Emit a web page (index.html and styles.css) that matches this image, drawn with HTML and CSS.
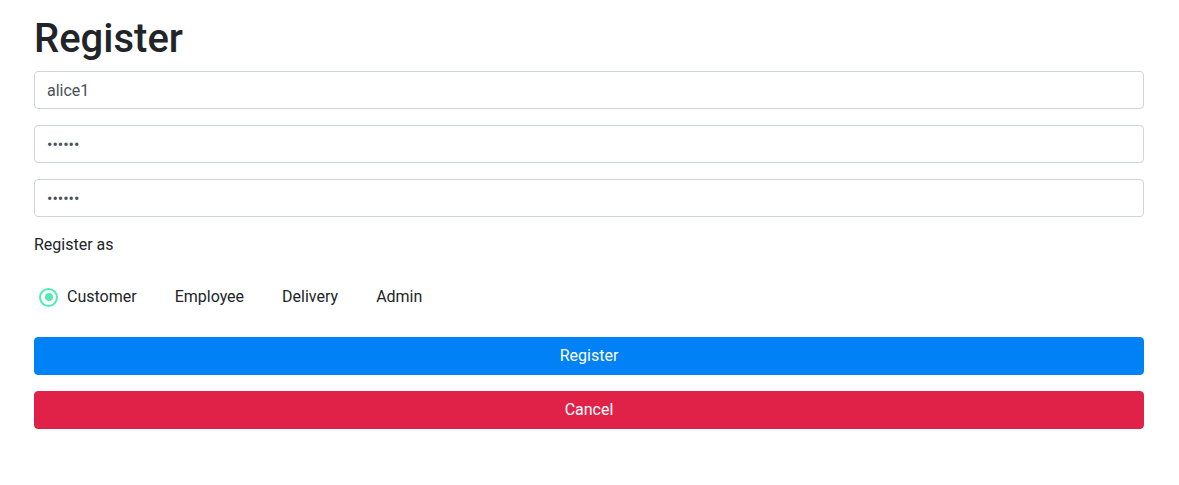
FILE: index.html
```html
<!DOCTYPE html>
<html lang="en">
<head>
<meta charset="utf-8">
<title>Register</title>
<link rel="stylesheet" href="styles.css">
</head>
<body>
<div class="container">
  <h1 class="title">Register</h1>
  <form class="form">
    <input class="field" type="text" value="alice1">
    <input class="field" type="password" value="secret">
    <input class="field" type="password" value="secret">
    <div class="label">Register as</div>
    <div class="radio-group">
      <label class="radio-item"><span class="radio checked"></span><span class="radio-text">Customer</span></label>
      <label class="radio-item"><span class="radio"></span><span class="radio-text">Employee</span></label>
      <label class="radio-item"><span class="radio"></span><span class="radio-text">Delivery</span></label>
      <label class="radio-item"><span class="radio"></span><span class="radio-text">Admin</span></label>
    </div>
    <button type="button" class="btn btn-primary">Register</button>
    <button type="button" class="btn btn-danger">Cancel</button>
  </form>
</div>
</body>
</html>
```
FILE: styles.css
```css
* { box-sizing: border-box; }
html, body { margin: 0; padding: 0; background: #fff; }
body {
  font-family: Roboto, "Liberation Sans", Arial, sans-serif;
  font-size: 16px;
  line-height: 1.5;
  color: #212529;
}
.container {
  max-width: 1141px;
  margin: 0 auto;
  padding: 15px 16px 0 15px;
}
.title {
  margin: 0 0 8px;
  font-size: 40px;
  font-weight: 500;
  line-height: 1.2;
  color: #212529;
}
.form { display: flex; flex-direction: column; }
.field {
  display: block;
  width: 100%;
  height: 38px;
  padding: 6px 12px;
  margin: 0 0 16px;
  font-family: inherit;
  font-size: 16px;
  line-height: 1.5;
  color: #495057;
  background: #fff;
  border: 1px solid #ced4da;
  border-radius: 4px;
  outline: none;
}
.label {
  line-height: 24px;
}
.radio-group {
  display: flex;
  align-items: center;
  gap: 10px;
  padding: 28px 0 28px 5px;
}
.radio-item {
  display: flex;
  align-items: center;
  gap: 9px;
  line-height: 24px;
}
.radio {
  width: 19px;
  height: 19px;
  border-radius: 50%;
  position: relative;
}
.radio.checked {
  border: 2.5px solid #55eab2;
}
.radio.checked::after {
  content: "";
  position: absolute;
  left: 50%;
  top: 50%;
  width: 8px;
  height: 8px;
  margin: -4px 0 0 -4px;
  border-radius: 50%;
  background: #55eab2;
}
.btn {
  display: block;
  width: 100%;
  height: 38px;
  padding: 6px 12px;
  margin: 0 0 16px;
  font-family: inherit;
  font-size: 16px;
  line-height: 1.5;
  color: #fff;
  border: 1px solid transparent;
  border-radius: 4px;
  text-align: center;
  cursor: pointer;
}
.btn-primary { background: #0081f5; border-color: #0081f5; }
.btn-danger { background: #e02249; border-color: #e02249; }
```
